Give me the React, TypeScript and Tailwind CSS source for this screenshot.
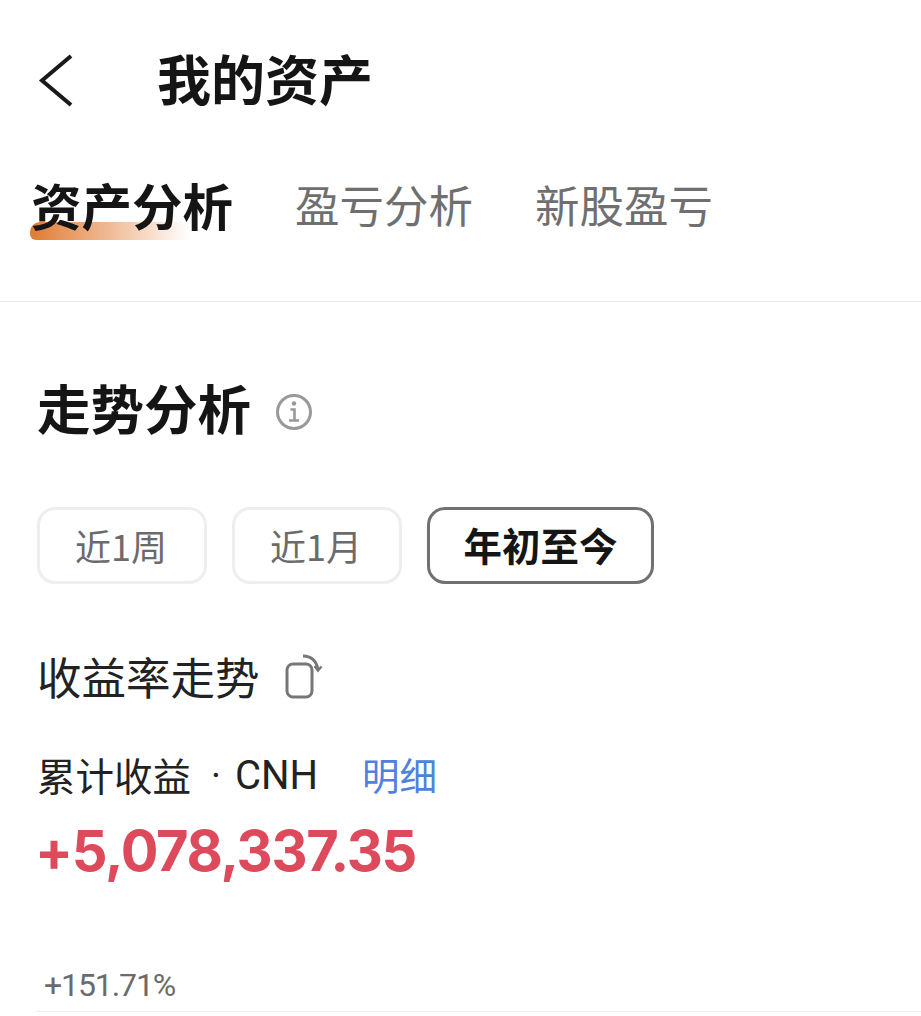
import React from "react";

const FONT = "font-['Noto_Sans_CJK_SC','Noto_Sans',sans-serif]";

function BackIcon() {
  return (
    <svg width="36" height="56" viewBox="0 0 36 56" fill="none" className="shrink-0">
      <path d="M33 3 L4 27.5 L33 52" stroke="#1a1a1a" strokeWidth="4" />
    </svg>
  );
}

function InfoIcon() {
  return (
    <svg width="38" height="38" viewBox="0 0 38 38" fill="none" className="shrink-0">
      <circle cx="19" cy="19" r="16.5" stroke="#999" strokeWidth="3" />
      <circle cx="19" cy="10.5" r="2.2" fill="#999" />
      <path d="M15.5 16.5 H19.5 V27 M14 27.5 H24" stroke="#999" strokeWidth="2.6" />
    </svg>
  );
}

function RotateIcon() {
  return (
    <svg width="40" height="46" viewBox="0 0 40 46" fill="none" className="shrink-0">
      <rect x="3" y="11" width="25" height="33" rx="6" stroke="#777" strokeWidth="3" />
      <path d="M19 3 C26 3 32 7 34 16" stroke="#777" strokeWidth="2.8" />
      <path d="M30.5 13 L34 17.5 L37.5 13.5" stroke="#777" strokeWidth="2.4" />
    </svg>
  );
}

function RangeButton({ label, active }: { label: string; active?: boolean }) {
  return active ? (
    <div className="flex h-[77px] w-[227px] items-center justify-center rounded-[18px] border-[3px] border-[#707070] pb-[2px] text-[38.5px] font-bold text-[#151515]">
      {label}
    </div>
  ) : (
    <div className="flex h-[77px] w-[170px] items-center justify-center rounded-[18px] border-[3px] border-[#eeeeee] pr-[2px] pb-[2px] text-[36px] text-[#6b6b6b]">
      {label}
    </div>
  );
}

export default function App() {
  return (
    <div className={`h-[1016px] w-[921px] overflow-hidden bg-white ${FONT}`}>
      {/* Header */}
      <div className="flex h-[162px] items-center gap-[83px] pl-[38px]">
        <BackIcon />
        <h1 className="mb-[6px] text-[54px] leading-none font-bold text-[#151515]">我的资产</h1>
      </div>

      {/* Tabs */}
      <div className="flex h-[140px] items-start gap-[62px] border-b border-[#ebebeb] pl-[31px]">
        <div className="relative mt-[12px]">
          <div className="absolute top-[48px] -left-[1px] h-[18px] w-[160px] rounded-tl-[10px] rounded-bl-[6px] bg-gradient-to-r from-[#e07a2e] via-[#efbb95] via-50% to-white" />
          <span className="relative text-[50.5px] leading-[60px] font-bold text-[#151515]">资产分析</span>
        </div>
        <span className="mt-[14px] text-[44.5px] leading-[56px] text-[#6f6f6f]">盈亏分析</span>
        <span className="mt-[14px] text-[44.5px] leading-[56px] text-[#6f6f6f]">新股盈亏</span>
      </div>

      {/* Trend section */}
      <div className="pl-[38px]">
        <div className="mt-[78px] flex h-[64px] items-center gap-[24px]">
          <h2 className="-ml-[1px] mb-[10px] text-[53.5px] leading-none font-bold text-[#151515]">走势分析</h2>
          <InfoIcon />
        </div>

        <div className="mt-[63px] -ml-[1px] flex gap-[25px]">
          <RangeButton label="近1周" />
          <RangeButton label="近1月" />
          <RangeButton label="年初至今" active />
        </div>

        <div className="mt-[62px] flex h-[60px] items-center gap-[24px]">
          <span className="-ml-[1px] text-[44.5px] leading-none text-[#222222]">收益率走势</span>
          <RotateIcon />
        </div>

        <div className="mt-[45px] flex h-[46px] items-center">
          <span className="-ml-[1px] text-[38.5px] leading-none text-[#222222]">累计收益</span>
          <span className="mt-[3px] ml-[20px] font-['Roboto',sans-serif] text-[38px] leading-none text-[#222222]">·</span>
          <span className="mt-[3px] ml-[14px] font-['Roboto',sans-serif] text-[40px] leading-none text-[#222222]">CNH</span>
          <span className="ml-[44px] text-[37.5px] leading-none text-[#4f81dd]">明细</span>
        </div>

        <div className="mt-[23px] -ml-[3px] font-['Inter',sans-serif] text-[56px] leading-[62px] font-bold tracking-[-1.3px] text-[#dd4a5c]">
          +5,078,337.35
        </div>

        <div className="mt-[84px] pl-[6px] font-['Roboto',sans-serif] text-[32px] leading-[38px] tracking-[-1.1px] text-[#6b6b6b]">
          +151.71%
        </div>
      </div>

      <div className="mt-[7px] ml-[36px] border-t border-[#eeeeee]" />
    </div>
  );
}
